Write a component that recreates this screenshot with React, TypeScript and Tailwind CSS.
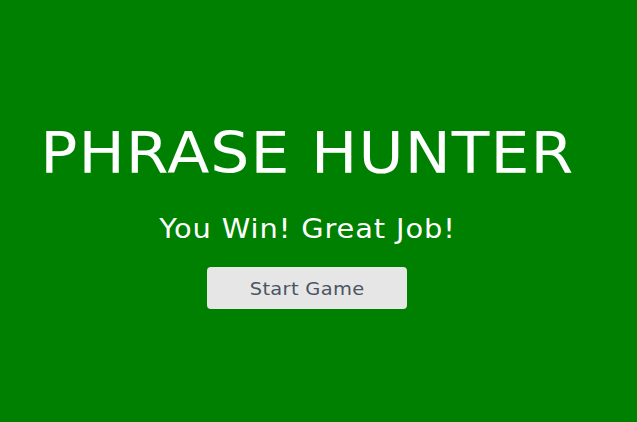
export default function App() {
  return (
    <div className="w-full h-[422px] bg-[#008000] flex flex-col items-center pt-[117px] pr-[23px]" style={{ fontFamily: '"DejaVu Sans", sans-serif' }}>
      <h1 className="text-white text-[57px] leading-[72px] font-normal whitespace-nowrap tracking-[1px] scale-x-[1.08]">PHRASE HUNTER</h1>
      <h2 className="mt-[23px] text-white text-[26px] leading-[34px] font-normal whitespace-nowrap tracking-[0.8px] scale-x-[1.11]">You Win! Great Job!</h2>
      <button className="mt-[21px] w-[200px] h-[42px] rounded-[4px] bg-[#e6e6e6] text-[#4b5563] text-[18px]">
        <span className="inline-block tracking-[0.3px] scale-x-[1.08]">Start Game</span>
      </button>
    </div>
  );
}
